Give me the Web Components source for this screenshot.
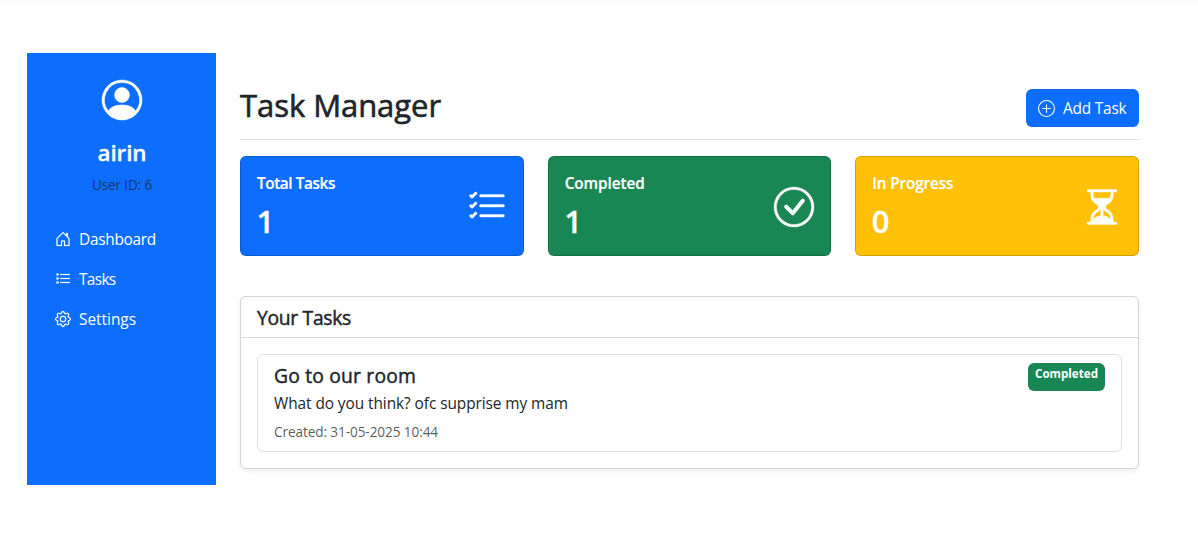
<!DOCTYPE html>
<html lang="en">
<head>
<meta charset="utf-8">
<title>Task Manager</title>
<style>
html,body{margin:0;height:100%}
body{background:#fff;color:#212529;font-family:"Open Sans","Noto Sans",sans-serif;font-size:15.4px;line-height:24px}
</style>
</head>
<body>
<task-app></task-app>
<script>
const rows = (f) => [0, 4, 8].map(f).join('');
const ICONS = {
  person: '<path d="M11 6a3 3 0 1 1-6 0 3 3 0 0 1 6 0"/><path fill-rule="evenodd" d="M0 8a8 8 0 1 1 16 0A8 8 0 0 1 0 8m8-7a7 7 0 0 0-5.468 11.37C3.242 11.226 4.805 10 8 10s4.757 1.225 5.468 2.37A7 7 0 0 0 8 1"/>',
  house: '<path d="M8.354 1.146a.5.5 0 0 0-.708 0l-6 6A.5.5 0 0 0 1.5 7.5v7a.5.5 0 0 0 .5.5h4.5a.5.5 0 0 0 .5-.5v-4h2v4a.5.5 0 0 0 .5.5H14a.5.5 0 0 0 .5-.5v-7a.5.5 0 0 0-.146-.354L13 5.793V2.5a.5.5 0 0 0-.5-.5h-1a.5.5 0 0 0-.5.5v1.293zM2.5 14V7.707l5.5-5.5 5.5 5.5V14H10v-4a.5.5 0 0 0-.5-.5h-3a.5.5 0 0 0-.5.5v4z"/>',
  list: rows(y => `<path d="M1.5 ${y + 2.5}h2v2h-2zM5.5 ${y + 3}h9a.5.5 0 0 1 0 1h-9a.5.5 0 0 1 0-1"/>`),
  checks: rows(y => `<path d="M5.5 ${y + 3}h9a.5.5 0 0 1 0 1h-9a.5.5 0 0 1 0-1M3.854 ${y + 2.146}a.5.5 0 0 1 0 .708l-1.5 1.5a.5.5 0 0 1-.708 0l-.5-.5a.5.5 0 1 1 .708-.708l.146.147 1.146-1.147a.5.5 0 0 1 .708 0"/>`),
  gear: '<path d="M8 4.754a3.246 3.246 0 1 0 0 6.492 3.246 3.246 0 0 0 0-6.492M5.754 8a2.246 2.246 0 1 1 4.492 0 2.246 2.246 0 0 1-4.492 0"/><path d="M9.796 1.343c-.527-1.79-3.065-1.79-3.592 0l-.094.319a.873.873 0 0 1-1.255.52l-.292-.16c-1.64-.892-3.433.902-2.54 2.541l.159.292a.873.873 0 0 1-.52 1.255l-.319.094c-1.79.527-1.79 3.065 0 3.592l.319.094a.873.873 0 0 1 .52 1.255l-.16.292c-.892 1.64.901 3.434 2.541 2.54l.292-.159a.873.873 0 0 1 1.255.52l.094.319c.527 1.79 3.065 1.79 3.592 0l.094-.319a.873.873 0 0 1 1.255-.52l.292.16c1.64.893 3.434-.902 2.54-2.541l-.159-.292a.873.873 0 0 1 .52-1.255l.319-.094c1.79-.527 1.79-3.065 0-3.592l-.319-.094a.873.873 0 0 1-.52-1.255l.16-.292c.893-1.64-.902-3.433-2.541-2.54l-.292.159a.873.873 0 0 1-1.255-.52zm-2.633.283c.246-.835 1.428-.835 1.674 0l.094.319a1.873 1.873 0 0 0 2.693 1.115l.291-.16c.764-.415 1.6.42 1.184 1.185l-.159.292a1.873 1.873 0 0 0 1.116 2.692l.318.094c.835.246.835 1.428 0 1.674l-.319.094a1.873 1.873 0 0 0-1.115 2.693l.16.291c.415.764-.42 1.6-1.185 1.184l-.291-.159a1.873 1.873 0 0 0-2.693 1.116l-.094.318c-.246.835-1.428.835-1.674 0l-.094-.319a1.873 1.873 0 0 0-2.692-1.115l-.292.16c-.764.415-1.6-.42-1.184-1.185l.159-.291A1.873 1.873 0 0 0 1.945 8.93l-.319-.094c-.835-.246-.835-1.428 0-1.674l.319-.094A1.873 1.873 0 0 0 3.06 4.377l-.16-.292c-.415-.764.42-1.6 1.185-1.184l.292.159a1.873 1.873 0 0 0 2.692-1.115z"/>',
  plus: '<path d="M8 15A7 7 0 1 1 8 1a7 7 0 0 1 0 14m0 1A8 8 0 1 0 8 0a8 8 0 0 0 0 16"/><path d="M8 4a.5.5 0 0 1 .5.5v3h3a.5.5 0 0 1 0 1h-3v3a.5.5 0 0 1-1 0v-3h-3a.5.5 0 0 1 0-1h3v-3A.5.5 0 0 1 8 4"/>',
  check: '<path d="M8 15A7 7 0 1 1 8 1a7 7 0 0 1 0 14m0 1A8 8 0 1 0 8 0a8 8 0 0 0 0 16"/><path d="M10.97 4.97a.235.235 0 0 0-.02.022L7.477 9.417 5.384 7.323a.75.75 0 0 0-1.06 1.06L6.97 11.03a.75.75 0 0 0 1.079-.02l3.992-4.99a.75.75 0 0 0-1.071-1.05"/>',
  hourglass: '<path d="M2.5 15a.5.5 0 1 1 0-1h1v-1a4.5 4.5 0 0 1 2.557-4.06c.29-.139.443-.377.443-.59v-.7c0-.213-.154-.451-.443-.59A4.5 4.5 0 0 1 3.5 3V2h-1a.5.5 0 0 1 0-1h11a.5.5 0 0 1 0 1h-1v1a4.5 4.5 0 0 1-2.557 4.06c-.29.139-.443.377-.443.59v.7c0 .213.154.451.443.59A4.5 4.5 0 0 1 12.5 13v1h1a.5.5 0 0 1 0 1zm2-13v1c0 .537.12 1.045.337 1.5h6.326c.216-.455.337-.963.337-1.5V2zm3 6.35c0 .701-.478 1.236-1.011 1.492A3.5 3.5 0 0 0 4.5 13s.866-1.299 3-1.48zm1 0v3.17c2.134.181 3 1.48 3 1.48a3.5 3.5 0 0 0-1.989-3.158C8.978 9.586 8.5 9.052 8.5 8.351z"/>'
};

function define(name, render, after) {
  customElements.define(name, class extends HTMLElement {
    connectedCallback() {
      if (this.shadowRoot) return;
      this.attachShadow({ mode: 'open' }).innerHTML = render(this);
      if (after) after(this);
    }
  });
}

define('ui-icon', el => `<style>:host{display:block;flex:none}svg{display:block}path{stroke:currentColor;stroke-width:var(--icon-weight,0)}</style>
<svg width="${el.getAttribute('size')}" height="${el.getAttribute('size')}" viewBox="0 0 16 16" overflow="visible" fill="currentColor">${ICONS[el.getAttribute('name')]}</svg>`);

/* One line of text, tracked so that it spans the given width. */
define('ui-text', () => `<style>:host{display:block;width:max-content;white-space:nowrap}</style><slot></slot>`, el => {
  const range = document.createRange();
  range.selectNodeContents(el);
  const natural = range.getBoundingClientRect().width;
  const width = Number(el.getAttribute('width'));
  if (natural && width) el.style.letterSpacing = ((width - natural) / el.textContent.length).toFixed(3) + 'px';
});

define('nav-item', el => `<style>
:host{display:flex;align-items:center;height:40px;padding-left:28px;gap:8px;color:#fff}
ui-icon{margin-bottom:2px;--icon-weight:.2}
</style><ui-icon name="${el.getAttribute('icon')}" size="16"></ui-icon><ui-text width="${el.getAttribute('width')}">${el.textContent}</ui-text>`);

define('side-bar', () => `<style>
:host{display:flex;flex-direction:column;background:#0d6efd;color:#fff;width:189px;height:432px;box-sizing:border-box;padding-top:27px}
.user{display:flex;flex-direction:column;align-items:center;padding-left:1px;margin-bottom:25px}
.user ui-icon{--icon-weight:.2}
.name{font-size:22.4px;font-weight:600;-webkit-text-stroke:.3px currentColor;line-height:29px;margin-top:18px}
.id{font-size:13.6px;line-height:21px;color:rgba(33,37,41,.75);margin-top:7px}
</style>
<div class="user"><ui-icon name="person" size="40"></ui-icon>
<ui-text class="name" width="49">airin</ui-text><ui-text class="id" width="60">User ID: 6</ui-text></div>
<nav><nav-item icon="house" width="77">Dashboard</nav-item><nav-item icon="list" width="36.5">Tasks</nav-item><nav-item icon="gear" width="57">Settings</nav-item></nav>`);

define('add-button', el => `<style>
:host{display:flex;align-items:center;box-sizing:border-box;width:113px;height:38px;padding-left:12px;gap:8px;border-radius:6px;background:#0d6efd;color:#fff}
ui-text{margin-top:2px}
</style><ui-icon name="plus" size="17"></ui-icon><ui-text width="63.5">${el.textContent}</ui-text>`);

define('stat-card', el => `<style>
:host{display:flex;justify-content:space-between;align-items:center;box-sizing:border-box;height:100px;padding:2px 16px 0;border:1px solid rgba(0,0,0,.175);border-radius:6px;background:${el.getAttribute('color')};background-clip:border-box;color:#fff}
ui-icon{--icon-weight:.15}
.label{font-size:15.3px;font-weight:600;-webkit-text-stroke:.2px currentColor;line-height:19px}
.value{font-size:31px;font-weight:600;-webkit-text-stroke:.3px currentColor;line-height:38px;margin:9px 0 0 -.5px}
</style><div><ui-text class="label" width="${el.getAttribute('width')}">${el.getAttribute('label')}</ui-text>
<div class="value">${el.textContent}</div></div><ui-icon name="${el.getAttribute('icon')}" size="40"></ui-icon>`);

define('status-badge', () => `<style>
:host{display:block;box-sizing:border-box;width:77px;height:28px;padding:5px 7px;border-radius:6px;background:#198754;color:#fff;font-size:11.6px;font-weight:700;line-height:12px}
</style><ui-text width="63">Completed</ui-text>`);

define('task-row', () => `<style>
:host{display:flex;justify-content:space-between;align-items:flex-start;box-sizing:border-box;height:98px;padding:8px 16px;border:1px solid #dee2e6;border-radius:6px}
.title{font-size:19.3px;-webkit-text-stroke:.45px currentColor;line-height:24px;margin-top:1px}
.desc{line-height:24px;margin-top:4px}
.date{font-size:13.6px;line-height:21px;color:rgba(33,37,41,.75);margin-top:5px}
</style><div><ui-text class="title" width="142">Go to our room</ui-text>
<ui-text class="desc" width="294">What do you think? ofc supprise my mam</ui-text>
<ui-text class="date" width="164">Created: 31-05-2025 10:44</ui-text></div><status-badge></status-badge>`);

define('task-panel', () => `<style>
:host{display:block;box-sizing:border-box;height:173px;border:1px solid #d3d4d5;border-radius:6px;box-shadow:0 2px 4px rgba(0,0,0,.075)}
header{box-sizing:border-box;height:41px;border-bottom:1px solid #d3d4d5;padding:9px 16px;font-size:19.3px;-webkit-text-stroke:.45px currentColor;line-height:24px}
.body{padding:16px}
</style><header><ui-text width="94">Your Tasks</ui-text></header><div class="body"><task-row></task-row></div>`);

define('task-app', () => `<style>
:host{display:flex;box-sizing:border-box;height:538px;padding:53px 59px 0 27px;gap:24px;align-items:flex-start;background:linear-gradient(#fafafa,#fff) 0 0/100% 2px no-repeat #fff}
main{flex:1;padding-top:36px}
.top{display:flex;justify-content:space-between;align-items:flex-start;box-sizing:border-box;height:51px;border-bottom:1px solid #dee2e6}
.heading{font-size:31px;-webkit-text-stroke:.6px currentColor;line-height:38px;margin-top:-3px}
.stats{display:grid;grid-template-columns:repeat(3,1fr);gap:24px;margin:16px 0 40px}
</style><side-bar></side-bar><main>
<div class="top"><ui-text class="heading" width="201">Task Manager</ui-text><add-button>Add Task</add-button></div>
<div class="stats">
<stat-card color="#0d6efd" icon="checks" label="Total Tasks" width="78">1</stat-card>
<stat-card color="#198754" icon="check" label="Completed" width="80">1</stat-card>
<stat-card color="#ffc107" icon="hourglass" label="In Progress" width="81">0</stat-card>
</div><task-panel></task-panel></main>`);
</script>
</body>
</html>
